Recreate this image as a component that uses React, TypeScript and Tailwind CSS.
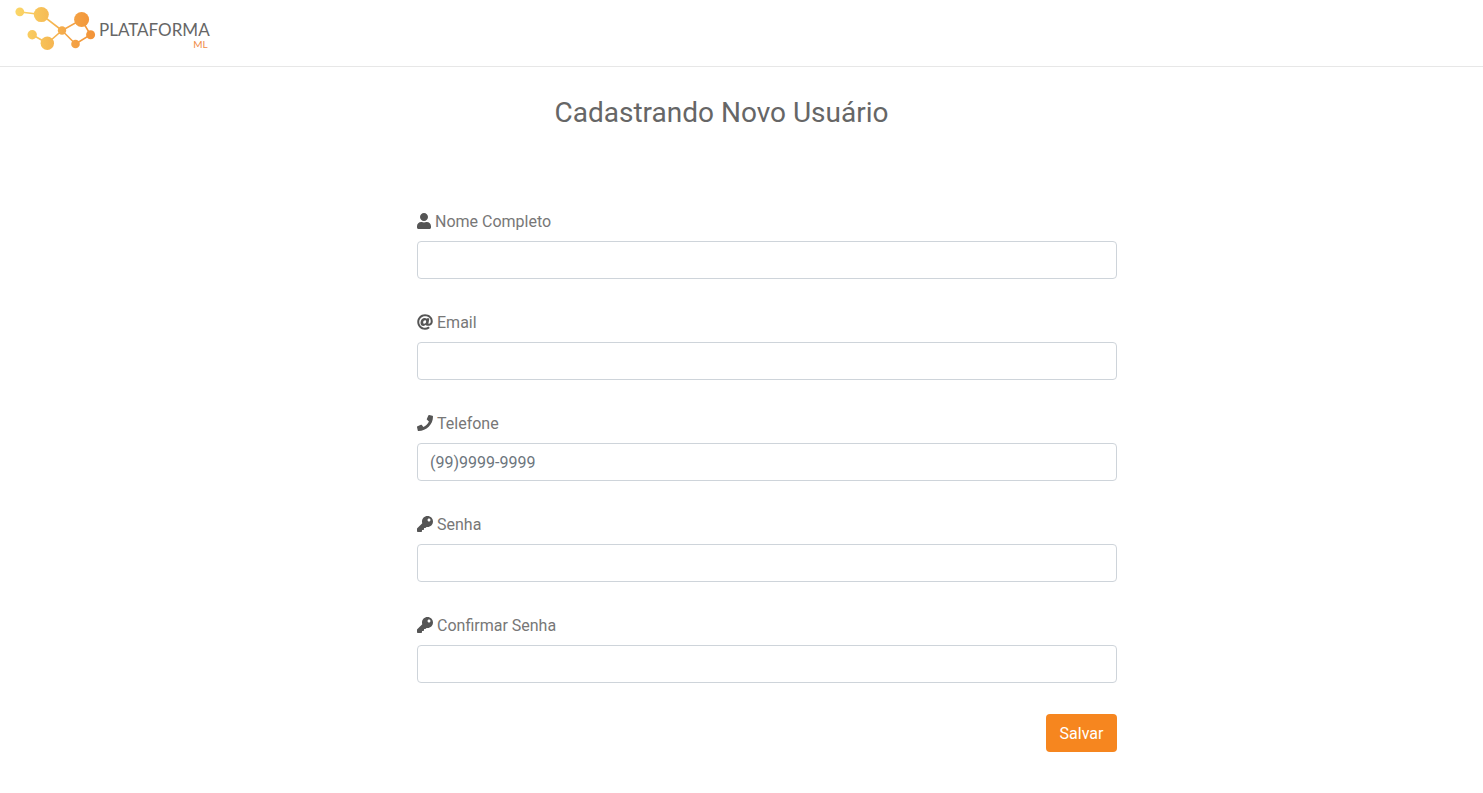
import { FaAt, FaKey, FaPhone, FaUser } from "react-icons/fa";
import type { IconType } from "react-icons";

type Field = {
  id: string;
  label: string;
  type: string;
  icon: IconType;
  iconWidth: string;
  placeholder?: string;
};

const fields: Field[] = [
  { id: "nome", label: "Nome Completo", type: "text", icon: FaUser, iconWidth: "w-3.5" },
  { id: "email", label: "Email", type: "email", icon: FaAt, iconWidth: "w-4" },
  { id: "telefone", label: "Telefone", type: "tel", icon: FaPhone, iconWidth: "w-4", placeholder: "(99)9999-9999" },
  { id: "senha", label: "Senha", type: "password", icon: FaKey, iconWidth: "w-4" },
  { id: "confirmar", label: "Confirmar Senha", type: "password", icon: FaKey, iconWidth: "w-4" },
];

function LogoMark() {
  return (
    <svg width="84" height="48" viewBox="14 4 84 48" aria-hidden="true">
      <defs>
        <linearGradient id="mark" gradientUnits="userSpaceOnUse" x1="15" y1="0" x2="96" y2="0">
          <stop offset="0" stopColor="#fbd768" />
          <stop offset="0.4" stopColor="#f6bc55" />
          <stop offset="0.65" stopColor="#f4a648" />
          <stop offset="1" stopColor="#f29237" />
        </linearGradient>
      </defs>
      <path
        d="M20 12L41.300 14.500L62 30.500L81.500 19.500L90.500 34.800L75.500 44L62 30.500L47.300 43.300L32.200 34.800"
        fill="none"
        stroke="url(#mark)"
        strokeWidth="1.6"
      />
      <g fill="url(#mark)">
        <circle cx="19.800" cy="11.800" r="4.400" />
        <circle cx="41.300" cy="14.600" r="7.500" />
        <circle cx="32.200" cy="34.800" r="4.700" />
        <circle cx="47.300" cy="43.300" r="6.700" />
        <circle cx="62" cy="30.500" r="4.200" />
        <circle cx="81.600" cy="19.500" r="7.500" />
        <circle cx="90.600" cy="34.800" r="4.500" />
        <circle cx="75.500" cy="44" r="4.300" />
      </g>
    </svg>
  );
}

export default function App() {
  return (
    <div className="bg-white font-['Roboto',sans-serif] text-base text-[#777777]">
      <header className="flex h-[67px] items-start border-b border-[#e7e7e7] px-3.5 pt-1">
        <a href="#" className="flex items-start gap-px font-['Lato',sans-serif]">
          <LogoMark />
          <span className="flex flex-col items-end pt-4">
            <span className="text-[17px] leading-5 text-[#666666]">PLATAFORMA</span>
            <span className="pr-0.5 text-[10px] leading-2 text-[#f08c46]">ML</span>
          </span>
        </a>
      </header>
      <main className="px-4 pb-10">
        <h1 className="mt-7 pr-10 text-center text-[28px] leading-9 text-[#666666]">
          Cadastrando Novo Usuário
        </h1>
        <div className="pl-[51px]">
          <form
            className="mx-auto mt-[78px] flex max-w-[700px] flex-col gap-[31px]"
            onSubmit={(event) => event.preventDefault()}
          >
            {fields.map(({ id, label, type, icon: Icon, iconWidth, placeholder }) => (
              <div key={id} className="flex flex-col gap-2">
                <label htmlFor={id} className="flex h-6 items-start gap-1 leading-[26px]">
                  <Icon className={`mt-1 h-4 ${iconWidth} text-[#555555]`} />
                  {label}
                </label>
                <input
                  id={id}
                  type={type}
                  placeholder={placeholder}
                  className="h-[38px] w-full rounded-sm border border-[#ced4da] bg-white px-3 text-[#495057] placeholder:text-[#6c757d] focus:border-[#f6861f] focus:outline-none"
                />
              </div>
            ))}
            <button
              type="submit"
              className="h-[38px] min-w-[71px] cursor-pointer self-end rounded-sm bg-[#f6861f] px-3 pt-0.5 text-white"
            >
              Salvar
            </button>
          </form>
        </div>
      </main>
    </div>
  );
}
